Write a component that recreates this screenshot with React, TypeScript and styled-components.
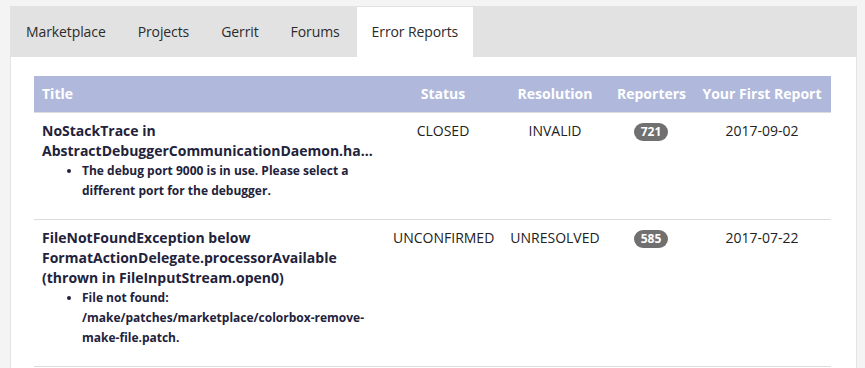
import React from "react";
import styled, { createGlobalStyle } from "styled-components";

const GlobalStyle = createGlobalStyle`
  body {
    margin: 0;
    background: #f4f4f4;
    font-family: "Open Sans", "DejaVu Sans", sans-serif;
    font-size: 14px;
    color: #222;
  }
`;

const Page = styled.div`
  padding: 6px 8px 0 10px;
`;

const Frame = styled.div`
  width: 847px;
`;

const TabBar = styled.nav`
  display: flex;
  gap: 2px;
  background: #e2e2e2;
  padding: 1px 0 0 1px;
`;

const Tab = styled.div<{ $active?: boolean }>`
  padding: 15px 15px;
  line-height: 20px;
  font-size: 14px;
  letter-spacing: -0.1px;
  color: #2b2b2b;
  background: ${({ $active }) => ($active ? "#ffffff" : "transparent")};
`;

const Panel = styled.section`
  background: #fff;
  border-left: 1px solid #e4e4e4;
  border-right: 1px solid #e4e4e4;
  padding: 19px 24px 0 23px;
  min-height: 320px;
`;

const Table = styled.table`
  width: 797px;
  table-layout: fixed;
  border-collapse: collapse;
  border-spacing: 0;
`;

const HeadRow = styled.tr`
  background: #b0b9dc;
`;

const Th = styled.th<{ $align?: string }>`
  padding: 8px;
  line-height: 20px;
  font-size: 14px;
  font-weight: 700;
  color: #fff;
  white-space: nowrap;
  text-align: ${({ $align }) => $align ?? "center"};
  border-bottom: 1px solid #dcdcdc;
`;

const Row = styled.tr`
  border-bottom: 1px solid #dcdcdc;
`;

const Td = styled.td<{ $align?: string }>`
  padding: 8px;
  line-height: 20px;
  vertical-align: top;
  color: #222;
  white-space: nowrap;
  text-align: ${({ $align }) => $align ?? "center"};
`;

const ReportTitle = styled.div`
  font-weight: 700;
  color: #22223b;
  white-space: normal;
`;

const Messages = styled.ul`
  margin: 0 0 10px;
  padding-left: 40px;
  white-space: normal;
`;

const Message = styled.li`
  font-size: 12px;
  font-weight: 700;
  color: #22223b;
  line-height: 20px;
`;

const Badge = styled.span`
  display: inline-block;
  min-width: 10px;
  padding: 3px 7px;
  font-size: 12px;
  font-weight: 700;
  line-height: 1;
  color: #fff;
  background: #707070;
  border-radius: 10px;
  vertical-align: middle;
`;

const tabs = ["Marketplace", "Projects", "Gerrit", "Forums", "Error Reports"];

const reports = [
  {
    title: ["NoStackTrace in", "AbstractDebuggerCommunicationDaemon.ha..."],
    messages: ["The debug port 9000 is in use. Please select a different port for the debugger."],
    status: "CLOSED",
    resolution: "INVALID",
    reporters: 721,
    first: "2017-09-02",
  },
  {
    title: ["FileNotFoundException below", "FormatActionDelegate.processorAvailable", "(thrown in FileInputStream.open0)"],
    messages: ["File not found: /make/patches/marketplace/colorbox-remove-make-file.patch."],
    status: "UNCONFIRMED",
    resolution: "UNRESOLVED",
    reporters: 585,
    first: "2017-07-22",
  },
];

export default function App() {
  return (
    <Page>
      <GlobalStyle />
      <Frame>
        <TabBar>
          {tabs.map((t) => (
            <Tab key={t} $active={t === "Error Reports"}>
              {t}
            </Tab>
          ))}
        </TabBar>
        <Panel>
          <Table>
            <colgroup>
              <col style={{ width: 351 }} />
              <col style={{ width: 116 }} />
              <col style={{ width: 108 }} />
              <col style={{ width: 84 }} />
              <col style={{ width: 138 }} />
            </colgroup>
            <thead>
              <HeadRow>
                <Th $align="left">Title</Th>
                <Th>Status</Th>
                <Th>Resolution</Th>
                <Th>Reporters</Th>
                <Th>Your First Report</Th>
              </HeadRow>
            </thead>
            <tbody>
              {reports.map((r) => (
                <Row key={r.first}>
                  <Td $align="left">
                    <ReportTitle>
                      {r.title.map((line) => (
                        <div key={line}>{line}</div>
                      ))}
                    </ReportTitle>
                    <Messages>
                      {r.messages.map((m) => (
                        <Message key={m}>{m}</Message>
                      ))}
                    </Messages>
                  </Td>
                  <Td>{r.status}</Td>
                  <Td>{r.resolution}</Td>
                  <Td>
                    <Badge>{r.reporters}</Badge>
                  </Td>
                  <Td>{r.first}</Td>
                </Row>
              ))}
            </tbody>
          </Table>
        </Panel>
      </Frame>
    </Page>
  );
}
